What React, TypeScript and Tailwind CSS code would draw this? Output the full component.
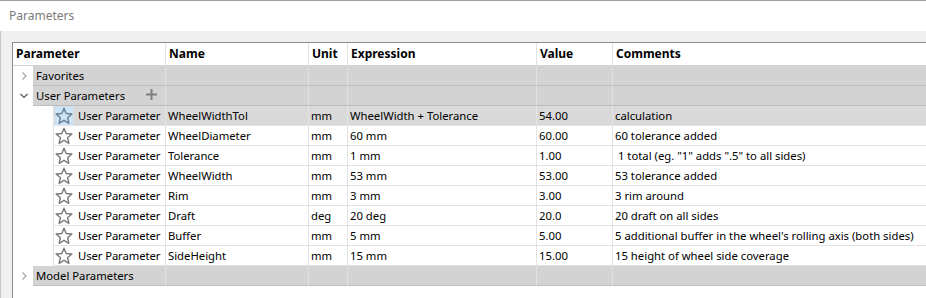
import React from 'react';

type Param = {
  name: string;
  unit: string;
  expr: string;
  value: string;
  comment: string;
  selected?: boolean;
};

const params: Param[] = [
  { name: 'WheelWidthTol', unit: 'mm', expr: 'WheelWidth + Tolerance', value: '54.00', comment: 'calculation', selected: true },
  { name: 'WheelDiameter', unit: 'mm', expr: '60 mm', value: '60.00', comment: '60 tolerance added' },
  { name: 'Tolerance', unit: 'mm', expr: '1 mm', value: '1.00', comment: ' 1 total (eg. "1" adds ".5" to all sides)' },
  { name: 'WheelWidth', unit: 'mm', expr: '53 mm', value: '53.00', comment: '53 tolerance added' },
  { name: 'Rim', unit: 'mm', expr: '3 mm', value: '3.00', comment: '3 rim around' },
  { name: 'Draft', unit: 'deg', expr: '20 deg', value: '20.0', comment: '20 draft on all sides' },
  { name: 'Buffer', unit: 'mm', expr: '5 mm', value: '5.00', comment: "5 additional buffer in the wheel's rolling axis (both sides)" },
  { name: 'SideHeight', unit: 'mm', expr: '15 mm', value: '15.00', comment: '15 height of wheel side coverage' },
];

const cols = 'grid grid-cols-[152px_143px_39px_189px_76px_1fr]';

const Star: React.FC<{ selected?: boolean }> = ({ selected }) => (
  <div className={`w-[18px] h-[18px] shrink-0 flex items-center justify-center ${selected ? 'bg-[#cce4f7]' : ''}`}>
    <svg width="18" height="18" viewBox="0 0 17 17">
      <path
        d="M8.5 1.2 L10.6 6.2 L15.9 6.6 L11.9 10.1 L13.1 15.4 L8.5 12.6 L3.9 15.4 L5.1 10.1 L1.1 6.6 L6.4 6.2 Z"
        fill="none"
        stroke={selected ? '#6d7f93' : '#7a7a7a'}
        strokeWidth="1.35"
        strokeLinejoin="round"
      />
    </svg>
  </div>
);

const Chevron: React.FC<{ open?: boolean }> = ({ open }) => (
  <svg width="10" height="10" viewBox="0 0 10 10">
    {open ? (
      <path d="M1.5 3 L5 6.5 L8.5 3" fill="none" stroke="#555" strokeWidth="1.2" />
    ) : (
      <path d="M3.5 1.5 L7 5 L3.5 8.5" fill="none" stroke="#a6a6a6" strokeWidth="1.2" />
    )}
  </svg>
);

const Plus = () => (
  <svg width="11" height="11" viewBox="0 0 11 11" className="-mt-[2px]">
    <path d="M5.5 0 V11 M0 5.5 H11" stroke="#7f7f7f" strokeWidth="2" />
  </svg>
);

const GroupRow: React.FC<{ label: string; open?: boolean; plus?: boolean }> = ({ label, open, plus }) => (
  <div className={`${cols} h-5`}>
    <div className="flex items-stretch">
      <div className="w-[20px] flex items-center justify-center pl-[2px]">
        <Chevron open={open} />
      </div>
      <div className="flex-1 bg-[#d3d3d3] border-b border-[#bdbdbd] flex items-center pl-[3px] pr-[8px] justify-between whitespace-nowrap">
        <span>{label}</span>
        {plus && <Plus />}
      </div>
    </div>
    {[0, 1, 2, 3, 4].map((i) => (
      <div key={i} className="bg-[#d3d3d3] border-b border-[#bdbdbd] border-l border-l-[#e1e1e1]" />
    ))}
  </div>
);

const ParamRow: React.FC<{ p: Param }> = ({ p }) => {
  const bg = p.selected ? 'bg-[#d9d9d9]' : 'bg-white';
  const cell = `${bg} border-b border-[#e3e3e3] border-l border-l-[#e3e3e3] flex items-center pl-[2px] whitespace-pre overflow-hidden`;
  return (
    <div className={`${cols} h-5`}>
      <div className="flex items-stretch">
        <div className="w-[40px]" />
        <div className={`${bg} flex-1 border-b border-[#e3e3e3] border-l border-l-[#e3e3e3] flex items-center gap-[5px] pl-[1px] whitespace-nowrap`}>
          <Star selected={p.selected} />
          <span className="tracking-[-0.1px]">User Parameter</span>
        </div>
      </div>
      <div className={cell}>{p.name}</div>
      <div className={cell}>{p.unit}</div>
      <div className={cell}>{p.expr}</div>
      <div className={cell}>{p.value}</div>
      <div className={cell}>{p.comment}</div>
    </div>
  );
};

const App: React.FC = () => {
  return (
    <div className="w-[926px] h-[298px] overflow-hidden bg-[#f0f0f0] text-[11.3px] text-black font-['Segoe_UI','Noto_Sans',sans-serif] flex flex-col border-t border-[#a0a0a0]">
      <div className="h-[30px] bg-white flex items-center pl-[9px] text-[#7a7a7a] text-[12px]">Parameters</div>
      <div className="flex-1 pl-[11px] pt-[11px] border-l border-l-[#c8c8c8]">
        <div className="h-full bg-white border-l border-t border-[#8c8c8c] leading-none">
          <div className={`${cols} h-[23px] font-bold text-[12px] border-b border-[#d4d4d4]`}>
            <div className="flex items-center pl-[3px]">Parameter</div>
            {['Name', 'Unit', 'Expression', 'Value', 'Comments'].map((h) => (
              <div key={h} className="flex items-center pl-[3px] border-l border-[#e3e3e3]">{h}</div>
            ))}
          </div>
          <GroupRow label="Favorites" />
          <GroupRow label="User Parameters" open plus />
          {params.map((p) => (
            <ParamRow key={p.name} p={p} />
          ))}
          <GroupRow label="Model Parameters" />
        </div>
      </div>
    </div>
  );
};

export default App;
